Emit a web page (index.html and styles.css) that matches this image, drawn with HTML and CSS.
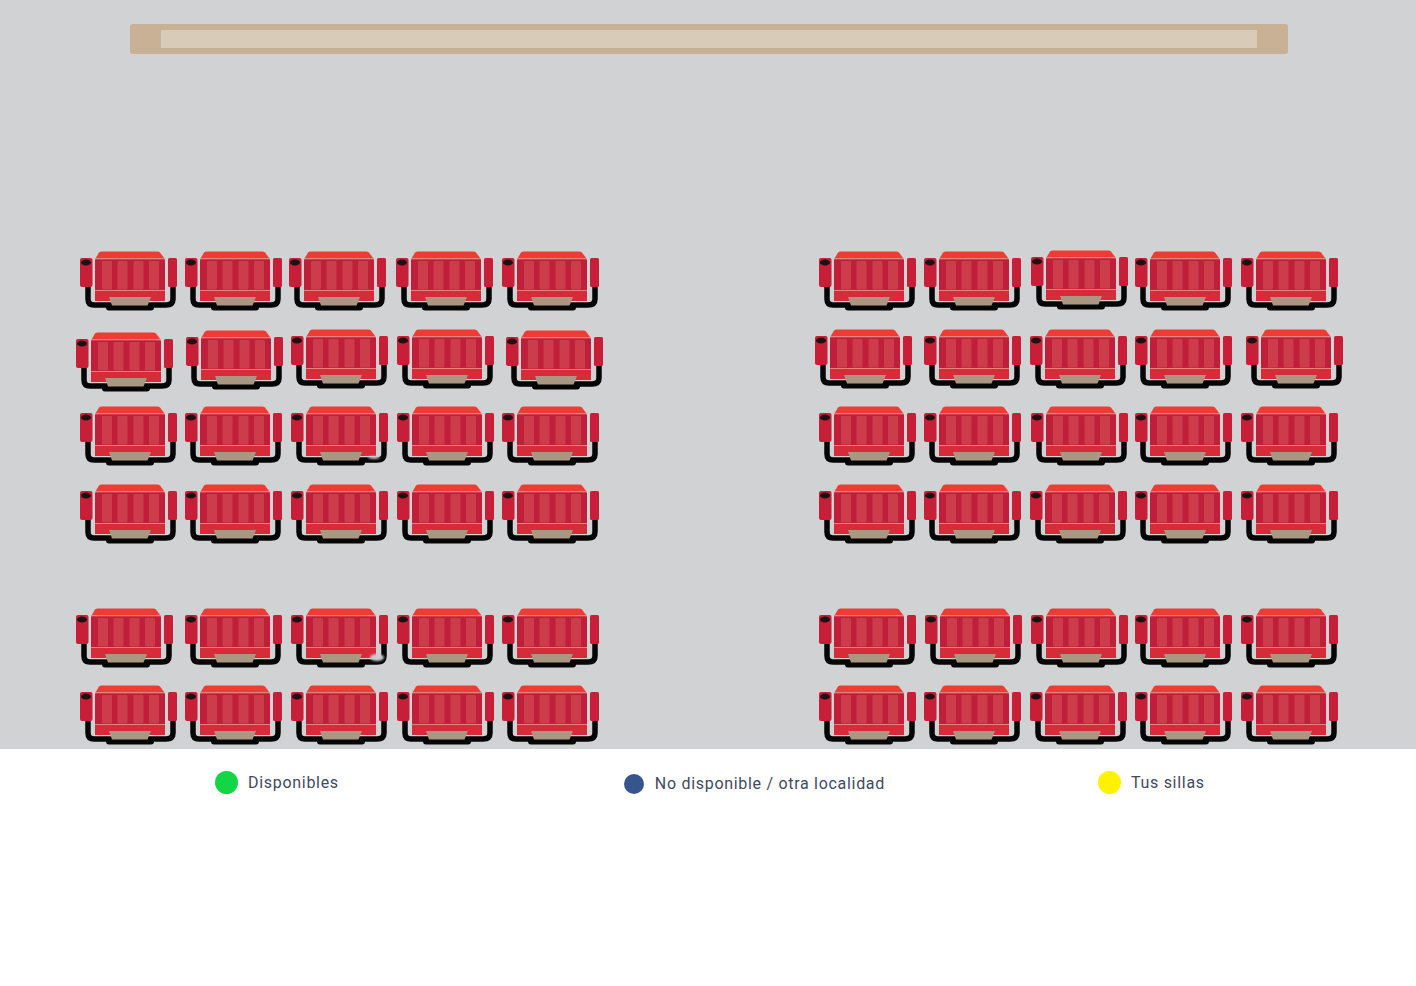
FILE: index.html
```html
<!DOCTYPE html>
<html lang="es">
<head>
<meta charset="utf-8">
<title>Sillas</title>
<link rel="stylesheet" href="styles.css">
</head>
<body>
<svg class="defs" width="0" height="0" aria-hidden="true">
  <symbol id="seat" viewBox="0 0 97 60">
    <path class="seat-frame" d="M8 33V48Q8 54 14 54H86Q93 54 93 48V33"/>
    <rect class="seat-foot" x="26" y="53" width="48" height="6.5" rx="3"/>
    <rect class="seat-arm" x="0" y="7" width="12.5" height="29" rx="2"/>
    <rect class="seat-arm" x="88" y="7" width="9" height="29" rx="1.5"/>
    <ellipse class="seat-cup" cx="6" cy="11.5" rx="5" ry="3"/>
    <rect class="seat-body" x="15" y="8" width="70" height="42" rx="1"/>
    <rect class="seat-stripe" x="22" y="10" width="10" height="28.5" rx="1"/>
    <rect class="seat-stripe" x="37.5" y="10" width="10" height="28.5" rx="1"/>
    <rect class="seat-stripe" x="53.5" y="10" width="10" height="28.5" rx="1"/>
    <rect class="seat-stripe" x="69" y="10" width="10" height="28.5" rx="1"/>
    <rect class="seat-lower" x="15" y="40" width="70" height="10"/>
    <rect class="seat-line" x="15" y="39" width="70" height="1"/>
    <path class="seat-lip" d="M15.5 7.5L19 1.5Q20 0.5 22 0.5H77Q79 0.5 80 1.5L84.5 7.5Z"/>
    <rect class="seat-line" x="15" y="7.5" width="70" height="0.8"/>
    <path class="seat-cushion" d="M29 46H71L67.5 54.5H32Z"/>
  </symbol>
</svg>
<main class="page">
  <section class="hall">
    <div class="screen"><div class="screen-inner"></div></div>
    <div class="seat-map">
      <svg class="seat" style="left:80px;top:251px"><use href="#seat"/></svg>
      <svg class="seat" style="left:185px;top:251px"><use href="#seat"/></svg>
      <svg class="seat" style="left:289px;top:251px"><use href="#seat"/></svg>
      <svg class="seat" style="left:396px;top:251px"><use href="#seat"/></svg>
      <svg class="seat" style="left:502px;top:251px"><use href="#seat"/></svg>
      <svg class="seat" style="left:76px;top:332px"><use href="#seat"/></svg>
      <svg class="seat" style="left:186px;top:330px"><use href="#seat"/></svg>
      <svg class="seat" style="left:291px;top:329px"><use href="#seat"/></svg>
      <svg class="seat" style="left:397px;top:329px"><use href="#seat"/></svg>
      <svg class="seat" style="left:506px;top:330px"><use href="#seat"/></svg>
      <svg class="seat" style="left:80px;top:406px"><use href="#seat"/></svg>
      <svg class="seat" style="left:185px;top:406px"><use href="#seat"/></svg>
      <svg class="seat" style="left:291px;top:406px"><use href="#seat"/></svg>
      <svg class="seat" style="left:397px;top:406px"><use href="#seat"/></svg>
      <svg class="seat" style="left:502px;top:406px"><use href="#seat"/></svg>
      <svg class="seat" style="left:80px;top:484px"><use href="#seat"/></svg>
      <svg class="seat" style="left:185px;top:484px"><use href="#seat"/></svg>
      <svg class="seat" style="left:291px;top:484px"><use href="#seat"/></svg>
      <svg class="seat" style="left:397px;top:484px"><use href="#seat"/></svg>
      <svg class="seat" style="left:502px;top:484px"><use href="#seat"/></svg>
      <svg class="seat" style="left:76px;top:608px"><use href="#seat"/></svg>
      <svg class="seat" style="left:185px;top:608px"><use href="#seat"/></svg>
      <svg class="seat" style="left:291px;top:608px"><use href="#seat"/></svg>
      <svg class="seat" style="left:397px;top:608px"><use href="#seat"/></svg>
      <svg class="seat" style="left:502px;top:608px"><use href="#seat"/></svg>
      <svg class="seat" style="left:80px;top:685px"><use href="#seat"/></svg>
      <svg class="seat" style="left:185px;top:685px"><use href="#seat"/></svg>
      <svg class="seat" style="left:291px;top:685px"><use href="#seat"/></svg>
      <svg class="seat" style="left:397px;top:685px"><use href="#seat"/></svg>
      <svg class="seat" style="left:502px;top:685px"><use href="#seat"/></svg>
      <svg class="seat" style="left:819px;top:251px"><use href="#seat"/></svg>
      <svg class="seat" style="left:924px;top:251px"><use href="#seat"/></svg>
      <svg class="seat" style="left:1031px;top:250px"><use href="#seat"/></svg>
      <svg class="seat" style="left:1135px;top:251px"><use href="#seat"/></svg>
      <svg class="seat" style="left:1241px;top:251px"><use href="#seat"/></svg>
      <svg class="seat" style="left:815px;top:329px"><use href="#seat"/></svg>
      <svg class="seat" style="left:924px;top:329px"><use href="#seat"/></svg>
      <svg class="seat" style="left:1030px;top:329px"><use href="#seat"/></svg>
      <svg class="seat" style="left:1135px;top:329px"><use href="#seat"/></svg>
      <svg class="seat" style="left:1246px;top:329px"><use href="#seat"/></svg>
      <svg class="seat" style="left:819px;top:406px"><use href="#seat"/></svg>
      <svg class="seat" style="left:924px;top:406px"><use href="#seat"/></svg>
      <svg class="seat" style="left:1031px;top:406px"><use href="#seat"/></svg>
      <svg class="seat" style="left:1135px;top:406px"><use href="#seat"/></svg>
      <svg class="seat" style="left:1241px;top:406px"><use href="#seat"/></svg>
      <svg class="seat" style="left:819px;top:484px"><use href="#seat"/></svg>
      <svg class="seat" style="left:924px;top:484px"><use href="#seat"/></svg>
      <svg class="seat" style="left:1030px;top:484px"><use href="#seat"/></svg>
      <svg class="seat" style="left:1135px;top:484px"><use href="#seat"/></svg>
      <svg class="seat" style="left:1241px;top:484px"><use href="#seat"/></svg>
      <svg class="seat" style="left:819px;top:608px"><use href="#seat"/></svg>
      <svg class="seat" style="left:925px;top:608px"><use href="#seat"/></svg>
      <svg class="seat" style="left:1031px;top:608px"><use href="#seat"/></svg>
      <svg class="seat" style="left:1135px;top:608px"><use href="#seat"/></svg>
      <svg class="seat" style="left:1241px;top:608px"><use href="#seat"/></svg>
      <svg class="seat" style="left:819px;top:685px"><use href="#seat"/></svg>
      <svg class="seat" style="left:924px;top:685px"><use href="#seat"/></svg>
      <svg class="seat" style="left:1030px;top:685px"><use href="#seat"/></svg>
      <svg class="seat" style="left:1135px;top:685px"><use href="#seat"/></svg>
      <svg class="seat" style="left:1241px;top:685px"><use href="#seat"/></svg>
      <span class="smudge smudge-a"></span>
      <span class="smudge smudge-b"></span>
    </div>
  </section>
  <ul class="legend">
    <li class="legend-item legend-available"><span class="dot dot-green"></span>Disponibles</li>
    <li class="legend-item legend-unavailable"><span class="dot dot-blue"></span>No disponible / otra localidad</li>
    <li class="legend-item legend-yours"><span class="dot dot-yellow"></span>Tus sillas</li>
  </ul>
</main>
</body>
</html>
```
FILE: styles.css
```css
html, body {
  margin: 0;
  padding: 0;
  background: #fff;
}

.defs {
  position: absolute;
}

.page {
  font-family: Roboto, "Liberation Sans", sans-serif;
  color: #414a5e;
}

.hall {
  position: relative;
  height: 749px;
  background: #d0d2d3;
  padding: 24px 128px 0 130px;
  box-sizing: border-box;
}

.screen {
  height: 30px;
  box-sizing: border-box;
  padding: 6px 31px;
  background: #c9b196;
  border-radius: 4px / 2px;
  filter: blur(0.4px);
}

.screen-inner {
  height: 18px;
  background: #d8cbb7;
}

.seat-map {
  position: absolute;
  inset: 0;
}

.seat {
  position: absolute;
  width: 97px;
  height: 60px;
  filter: blur(0.7px);
}

.seat-frame {
  fill: none;
  stroke: #060606;
  stroke-width: 5.5;
}

.seat-foot {
  fill: #060606;
}

.seat-arm {
  fill: #c61f37;
}

.seat-cup {
  fill: #1d1012;
}

.seat-body {
  fill: #bf1f38;
}

.seat-stripe {
  fill: #cc3c4a;
}

.seat-lower {
  fill: #d62c3a;
}

.seat-line {
  fill: #e8807e;
}

.seat-lip {
  fill: #ee3c34;
}

.seat-cushion {
  fill: #a99783;
}

.smudge {
  position: absolute;
  width: 12px;
  height: 5px;
  border-radius: 50%;
  background: #c9cbcc;
  filter: blur(0.8px);
}

.smudge-a {
  left: 368px;
  top: 456px;
  height: 3px;
}

.smudge-b {
  left: 370px;
  top: 654px;
  width: 14px;
  height: 7px;
}

.legend {
  list-style: none;
  margin: 0;
  padding: 22px 0 0 215px;
  display: flex;
  font-size: 16px;
  letter-spacing: 0.7px;
  line-height: 24px;
}

.legend-item {
  display: flex;
  align-items: center;
}

.legend-unavailable {
  margin-left: 285px;
  position: relative;
  top: 1px;
}

.legend-yours {
  margin-left: 213px;
}

.dot {
  border-radius: 50%;
  flex: none;
}

.dot-green {
  width: 23px;
  height: 23px;
  margin: -2px 10px 0 0;
  background: #12d645;
}

.dot-blue {
  width: 20px;
  height: 20px;
  margin-right: 11px;
  background: #36558f;
}

.dot-yellow {
  width: 23px;
  height: 23px;
  margin: -2px 10px 0 0;
  background: #fff200;
}
```
